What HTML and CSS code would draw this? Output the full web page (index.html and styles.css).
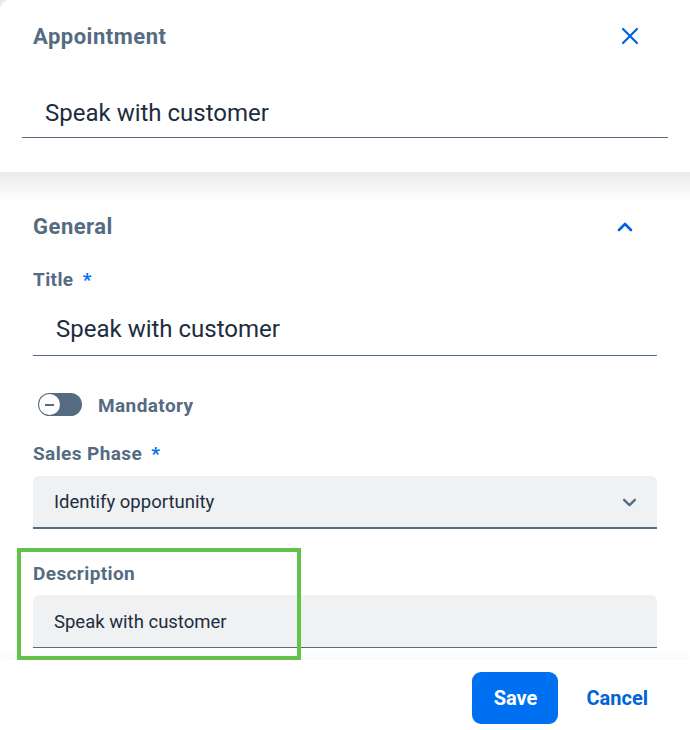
FILE: index.html
```html
<!DOCTYPE html>
<html>
<head>
<meta charset="utf-8">
<link rel="stylesheet" href="styles.css">
</head>
<body>
<div class="dialog">
  <header class="header">
    <div class="title-row">
      <span class="title">Appointment</span>
      <svg class="close" viewBox="0 0 18 18" width="18" height="18"><path d="M2 2 L16 16 M16 2 L2 16" stroke="#0064d9" stroke-width="2.2" fill="none" stroke-linecap="round"/></svg>
    </div>
    <div class="head-input">Speak with customer</div>
  </header>
  <main class="content">
    <div class="section-row">
      <span class="section-title">General</span>
      <svg class="chev-up" viewBox="0 0 16 10" width="16" height="10"><path d="M2 8 L8 2 L14 8" stroke="#0064d9" stroke-width="2.6" fill="none" stroke-linecap="round" stroke-linejoin="round"/></svg>
    </div>
    <div class="label lbl-title">Title <span class="req">*</span></div>
    <div class="line-input">Speak with customer</div>
    <div class="toggle-row">
      <span class="toggle"><span class="knob"><span class="minus"></span></span></span>
      <span class="toggle-label">Mandatory</span>
    </div>
    <div class="label lbl-phase">Sales Phase <span class="req">*</span></div>
    <div class="select">
      <span>Identify opportunity</span>
      <svg class="chev-down" viewBox="0 0 16 10" width="15" height="9"><path d="M2 2 L8 8 L14 2" stroke="#556b82" stroke-width="2.6" fill="none" stroke-linecap="round" stroke-linejoin="round"/></svg>
    </div>
    <div class="label lbl-desc">Description</div>
    <div class="select desc"><span>Speak with customer</span></div>
  </main>
  <footer class="footer">
    <button class="btn-save">Save</button>
    <button class="btn-cancel">Cancel</button>
  </footer>
  <div class="highlight"></div>
</div>
</body>
</html>
```
FILE: styles.css
```css
html, body {
  margin: 0;
  padding: 0;
  background: #e9ebed;
}
body {
  width: 690px;
  height: 730px;
  overflow: hidden;
  font-family: Roboto, "Liberation Sans", sans-serif;
}
.dialog {
  position: relative;
  width: 690px;
  height: 730px;
  background: #fff;
  border-top-left-radius: 10px;
  display: flex;
  flex-direction: column;
  overflow: hidden;
}
.header {
  position: relative;
  height: 172px;
  box-sizing: border-box;
  padding: 24px 22px 0 22px;
  background: #fff;
  z-index: 2;
}
.header::after {
  content: "";
  position: absolute;
  left: 0;
  right: 0;
  top: 172px;
  height: 30px;
  background: linear-gradient(to bottom, #ebebeb, rgba(255,255,255,0));
}
.title-row {
  display: flex;
  align-items: center;
  justify-content: space-between;
  height: 24px;
  padding-left: 11px;
  padding-right: 29px;
}
.title {
  font-size: 22px;
  font-weight: 700;
  color: #556b82;
  letter-spacing: 0.5px;
}
.close {
  display: block;
}
.head-input {
  margin-top: 42px;
  height: 48px;
  box-sizing: border-box;
  padding-left: 23px;
  display: flex;
  align-items: center;
  padding-bottom: 2px;
  border-bottom: 1px solid #556b82;
  font-size: 24px;
  color: #1d2d3e;
}
.content {
  flex: 1;
  overflow: hidden;
  padding: 42px 33px 0 33px;
  background: #fff;
}
.section-row {
  display: flex;
  align-items: center;
  justify-content: space-between;
  height: 24px;
  padding-right: 24px;
}
.section-title {
  font-size: 22px;
  font-weight: 700;
  color: #556b82;
  letter-spacing: 0.5px;
}
.chev-up {
  display: block;
  margin-top: 2px;
}
.label {
  font-size: 19px;
  font-weight: 700;
  color: #556b82;
  letter-spacing: 0.4px;
  line-height: 22px;
  height: 20px;
}
.req {
  color: #0070f2;
  margin-left: 4px;
}
.lbl-title { margin-top: 31px; }
.line-input {
  margin-top: 16px;
  height: 51px;
  box-sizing: border-box;
  border-bottom: 1px solid #556b82;
  padding-left: 23px;
  padding-bottom: 3px;
  display: flex;
  align-items: center;
  font-size: 24px;
  color: #1d2d3e;
}
.toggle-row {
  margin-top: 37px;
  height: 23px;
  display: flex;
  align-items: center;
}
.toggle {
  margin-left: 5px;
  width: 44px;
  height: 23px;
  border-radius: 12px;
  background: #556b82;
  display: flex;
  align-items: center;
  padding-left: 1px;
  box-sizing: border-box;
}
.knob {
  width: 21px;
  height: 21px;
  border-radius: 50%;
  background: #fff;
  display: flex;
  align-items: center;
  justify-content: center;
}
.minus {
  width: 9px;
  height: 2px;
  background: #556b82;
}
.toggle-label {
  margin-left: 16px;
  margin-top: 2px;
  font-size: 19px;
  font-weight: 700;
  letter-spacing: 0.4px;
  color: #556b82;
}
.lbl-phase { margin-top: 27px; }
.select {
  margin-top: 13px;
  height: 53px;
  box-sizing: border-box;
  background: #eff1f2;
  border-radius: 6px 6px 0 0;
  border-bottom: 2px solid #556b82;
  padding: 1px 20px 0 21px;
  display: flex;
  align-items: center;
  justify-content: space-between;
  font-size: 18.5px;
  color: #1d2d3e;
}
.chev-down { display: block; }
.lbl-desc { margin-top: 34px; }
.select.desc {
  margin-top: 12px;
  border-bottom: 1px solid #556b82;
}
.footer {
  height: 70px;
  box-sizing: border-box;
  padding: 12px 42px 0 0;
  display: flex;
  align-items: flex-start;
  justify-content: flex-end;
  background: #fff;
  box-shadow: 0 -6px 10px rgba(0,0,0,0.025);
  position: relative;
  z-index: 2;
}
.btn-save {
  width: 86px;
  height: 52px;
  border: none;
  border-radius: 9px;
  background: #0070f2;
  color: #fff;
  font-family: inherit;
  font-size: 20px;
  font-weight: 700;
  padding: 0;
}
.btn-cancel {
  margin-left: 28px;
  height: 52px;
  border: none;
  background: none;
  padding: 0;
  color: #0064d9;
  font-family: inherit;
  font-size: 20px;
  font-weight: 700;
}
.highlight {
  position: absolute;
  left: 17px;
  top: 548px;
  width: 284px;
  height: 112px;
  box-sizing: border-box;
  border: 4px solid #63c24a;
  z-index: 3;
}
```
